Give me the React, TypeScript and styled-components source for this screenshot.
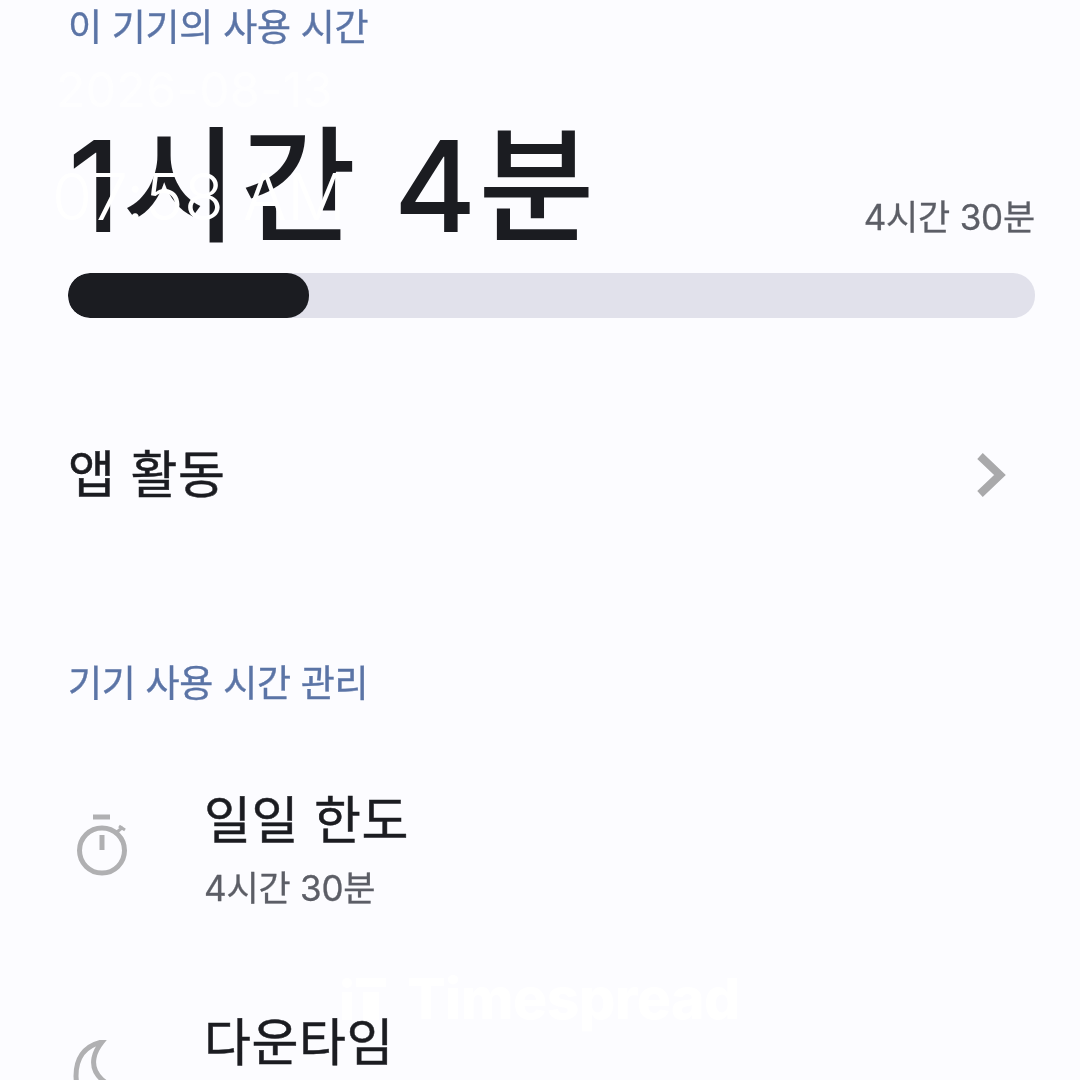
import React from "react";
import styled, { createGlobalStyle } from "styled-components";

const Global = createGlobalStyle`
  html, body { margin: 0; padding: 0; background: #fcfcff; }
  body { width: 1080px; height: 1080px; overflow: hidden; }
`;
const Page = styled.div`
  position: relative; width: 1080px; height: 1080px; overflow: hidden; background: #fcfcff;
`;
const Content = styled.div`
  box-sizing: border-box; padding: 2px 45px 0 68px; filter: blur(0.7px);
  font-family: Inter, "Noto Sans CJK KR", "Noto Sans", sans-serif; color: #1b1c21;
`;
const SectionLabel = styled.div<{ $mt?: number }>`
  margin-top: ${p => p.$mt ?? 0}px; font-size: 37px; line-height: 52px; color: #5b74a6;
  letter-spacing: -0.3px; -webkit-text-stroke: 0.4px #5b74a6;
`;
const Summary = styled.div`
  display: flex; justify-content: space-between; align-items: flex-end; margin-top: 57px; height: 132px;
`;
const Total = styled.div`
  font-size: 126px; font-weight: 500; line-height: 132px; letter-spacing: 2px; white-space: nowrap; margin-bottom: -9px;
`;
const Limit = styled.div`
  font-size: 35px; line-height: 46px; color: #5c5e66; margin-bottom: 3px; letter-spacing: -0.2px;
  -webkit-text-stroke: 0.3px #5c5e66;
`;
const Track = styled.div`
  margin-top: 30px; height: 45px; border-radius: 22px; background: #e1e1eb; overflow: hidden;
`;
const Fill = styled.div`
  height: 100%; border-radius: 22px; background: #1b1c21;
`;
const ActivityRow = styled.div`
  display: flex; align-items: center; justify-content: space-between; margin-top: 122px; height: 70px; padding-right: 26px;
`;
const RowTitle = styled.div`
  font-size: 51px; line-height: 68px; color: #1b1c21; letter-spacing: 0.6px; white-space: nowrap;
  -webkit-text-stroke: 0.5px #1b1c21;
`;
const Item = styled.div<{ $mt: number }>`
  display: grid; grid-template-columns: 136px 1fr; align-items: center; margin-top: ${p => p.$mt}px;
`;
const ItemIcon = styled.div`
  display: flex; margin-left: 5px;
`;
const ItemBody = styled.div`
  display: flex; flex-direction: column; gap: 9px;
`;
const ItemSub = styled.div`
  font-size: 35px; line-height: 48px; color: #5c5e66; letter-spacing: -0.2px;
  -webkit-text-stroke: 0.3px #5c5e66;
`;
const DateMark = styled.div`
  position: absolute; left: 56px; top: 60px; font: 400 48px/60px Inter, sans-serif; color: #fff; opacity: .75; letter-spacing: 0.5px;
`;
const TimeMark = styled.div`
  position: absolute; left: 52px; top: 155px; font: 300 65px/84px Inter, sans-serif; color: #fff; letter-spacing: 0.5px;
`;
const Brand = styled.div`
  position: absolute; left: 342px; top: 969px; display: flex; align-items: center; gap: 21px;
  font: 800 57px/60px Inter, sans-serif; color: #fff; letter-spacing: -0.5px;
`;

const Chevron = () => (
  <svg width="34" height="46" viewBox="0 0 34 46" fill="none">
    <path d="M5 4 L25 23 L5 42" stroke="#a9a9ab" strokeWidth="8" />
  </svg>
);
const Stopwatch = () => (
  <svg width="56" height="64" viewBox="0 0 56 64" fill="none" stroke="#b0b0b2" strokeWidth="5" overflow="visible">
    <circle cx="29" cy="32.5" r="22.5" />
    <path d="M20 -1 H37" />
    <path d="M29 17 V32" />
    <path d="M44 14 L50 9 M46 8 L52 12" strokeWidth="3" />
  </svg>
);
const Moon = () => (
  <svg width="56" height="64" viewBox="0 0 56 64" fill="none" stroke="#b0b0b2" strokeWidth="5">
    <path d="M29 2 C10 6 3 20 3 36 C3 52 16 62 30 62 C42 62 50 56 54 47 C34 50 18 34 21 18 C22 12 25 7 29 2 Z" />
  </svg>
);
const BrandMark = () => (
  <svg width="44" height="42" viewBox="0 0 44 42" fill="#fff">
    <circle cx="5" cy="5" r="5" /><rect x="0" y="14" width="10" height="28" />
    <rect x="14" y="0" width="30" height="9" /><rect x="21" y="14" width="16" height="28" />
  </svg>
);

export default function App() {
  return (
    <Page>
      <Global />
      <Content>
        <SectionLabel>이 기기의 사용 시간</SectionLabel>
        <Summary>
          <Total>1시간 4분</Total>
          <Limit>4시간 30분</Limit>
        </Summary>
        <Track><Fill style={{ width: `${(64 / 270) * 105}%` }} /></Track>
        <ActivityRow>
          <RowTitle>앱 활동</RowTitle>
          <Chevron />
        </ActivityRow>
        <SectionLabel $mt={148}>기기 사용 시간 관리</SectionLabel>
        <Item $mt={77}>
          <ItemIcon><Stopwatch /></ItemIcon>
          <ItemBody>
            <RowTitle>일일 한도</RowTitle>
            <ItemSub>4시간 30분</ItemSub>
          </ItemBody>
        </Item>
        <Item $mt={97}>
          <ItemIcon><Moon /></ItemIcon>
          <ItemBody>
            <RowTitle>다운타임</RowTitle>
            <ItemSub>사용 안함</ItemSub>
          </ItemBody>
        </Item>
      </Content>
      <DateMark>2026-08-13</DateMark>
      <TimeMark>07:58 AM</TimeMark>
      <Brand><BrandMark />Timespread</Brand>
    </Page>
  );
}
